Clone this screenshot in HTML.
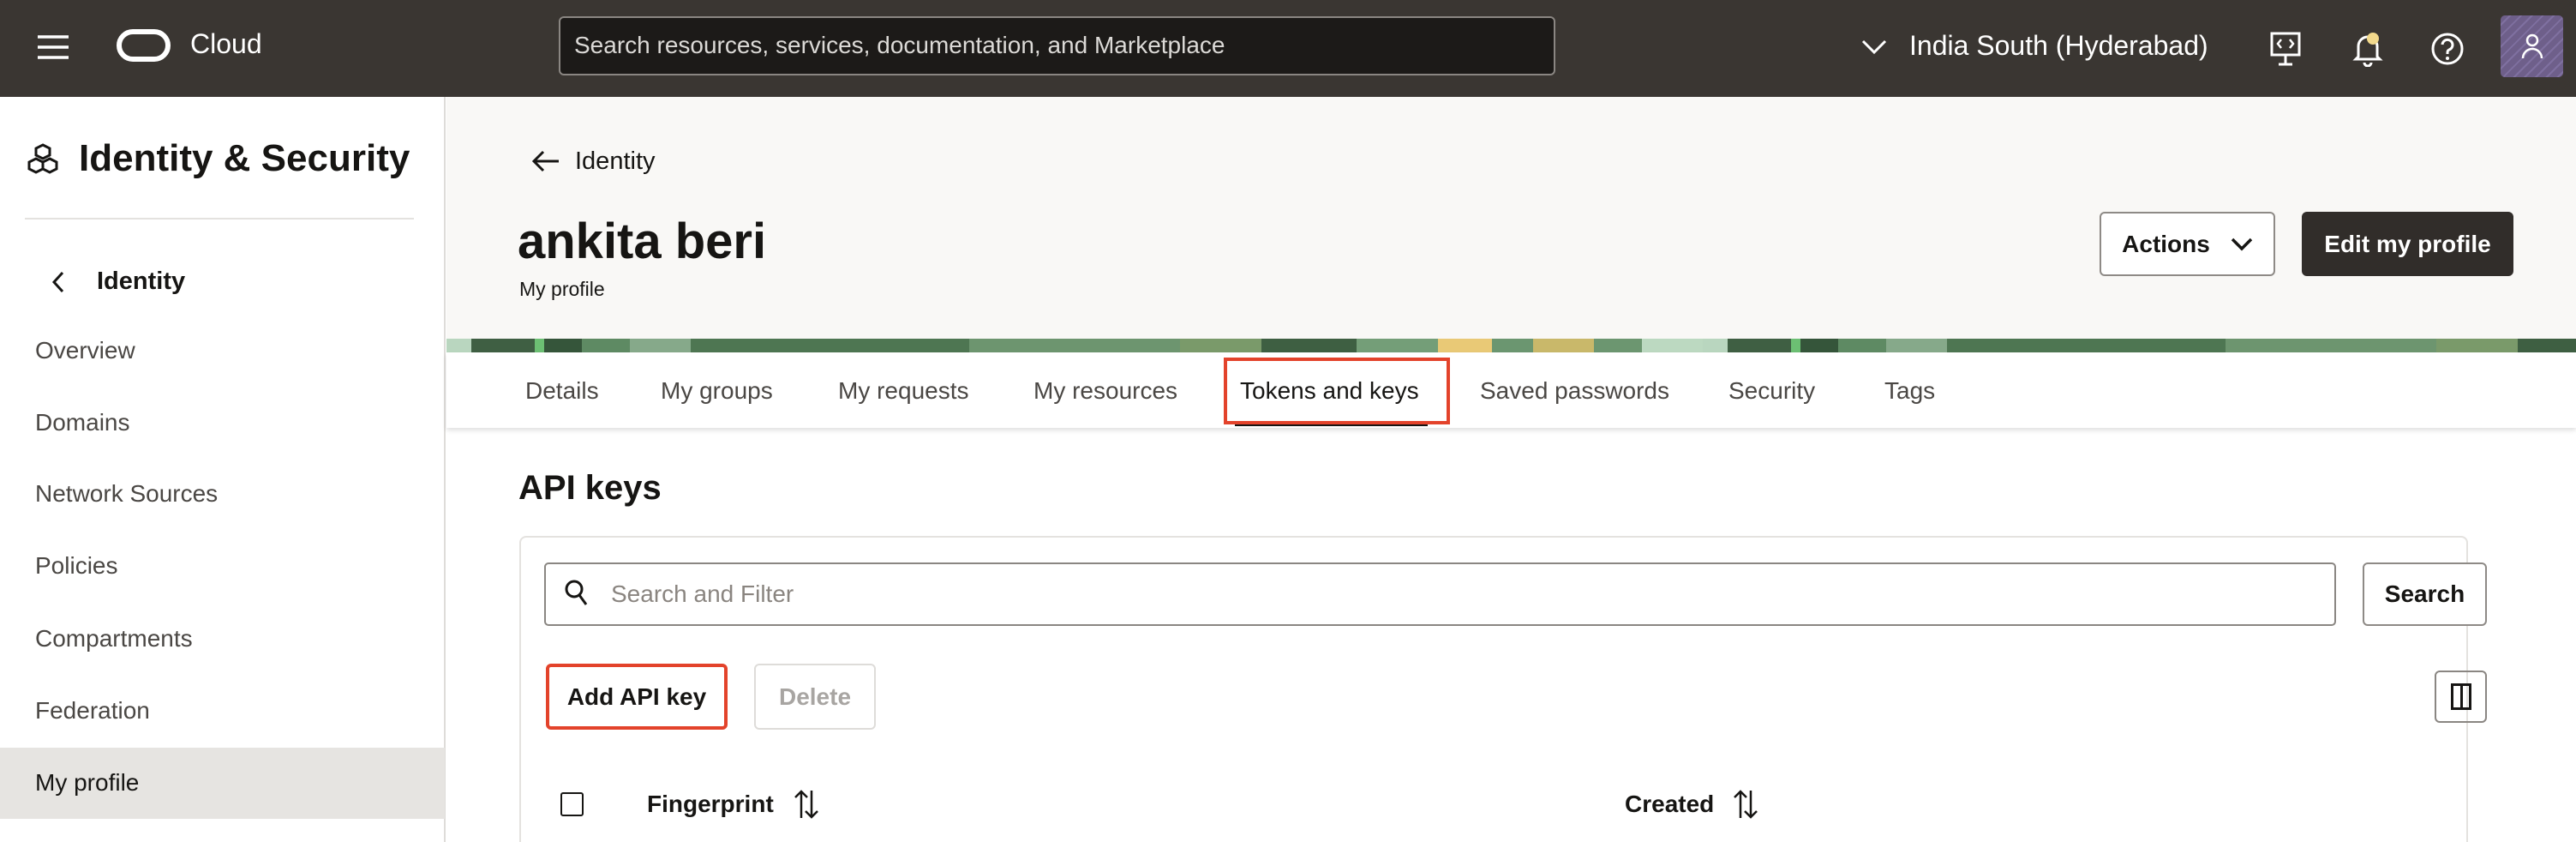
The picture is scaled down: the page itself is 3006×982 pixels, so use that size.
<!DOCTYPE html>
<html style="width:3006px;height:982px;overflow:hidden"><head><meta charset="utf-8">
<style>
*{box-sizing:border-box;margin:0;padding:0}
body{width:3006px;height:982px;overflow:hidden;font-family:"Liberation Sans",sans-serif;background:#fff;position:relative;color:#161513}
.a{position:absolute}
.top{left:0;top:0;width:3006px;height:113px;background:#3a3632}
.side{left:0;top:113px;width:520px;height:869px;background:#fff;border-right:2px solid #dedcd9}
.nav{left:41px;font-size:28px;color:#4a4744}
.hdr{left:521px;top:113px;width:2485px;height:282px;background:#f9f8f6}
.banner{left:521px;top:395px;width:2485px;height:16px;background:repeating-linear-gradient(90deg,#b9d6bf 0,#b9d6bf 29px,#3f5f43 29px,#3f5f43 103px,#6cbf73 103px,#6cbf73 114px,#35553a 114px,#35553a 158px,#5e8a63 158px,#5e8a63 214px,#86a98a 214px,#86a98a 285px,#4e7652 285px,#4e7652 610px,#6d956f 610px,#6d956f 856px,#7a9a6a 856px,#7a9a6a 951px,#3e5f42 951px,#3e5f42 1062px,#749e78 1062px,#749e78 1157px,#e9c976 1157px,#e9c976 1220px,#6b9670 1220px,#6b9670 1268px,#c9b86a 1268px,#c9b86a 1339px,#6c9670 1339px,#6c9670 1395px,#bcd9c1 1395px,#bcd9c1 1466px)}
.tabs{left:521px;top:411px;width:2485px;height:88px;background:#fff;box-shadow:0 3px 5px rgba(0,0,0,.12)}
.tab{top:440px;font-size:28px;color:#4a4744}
.btn{border:2px solid #8e8a86;border-radius:6px;background:#fff;font-size:28px;font-weight:bold;display:flex;align-items:center;justify-content:center}
</style></head><body>
<div class="a top"></div>
<svg class="a" style="left:44px;top:40px" width="36" height="30"><g stroke="#fff" stroke-width="3.5"><line x1="0" y1="3" x2="36" y2="3"/><line x1="0" y1="15" x2="36" y2="15"/><line x1="0" y1="27" x2="36" y2="27"/></g></svg>
<div class="a" style="left:136px;top:34px;width:63px;height:38px;border:6px solid #fff;border-radius:19px"></div>
<div class="a" style="left:222px;top:33px;font-size:32px;color:#fff">Cloud</div>
<div class="a" style="left:652px;top:19px;width:1163px;height:69px;background:#1c1a18;border:2px solid #8a8682;border-radius:6px"></div>
<div class="a" style="left:670px;top:37px;font-size:28px;color:#dcdad7">Search resources, services, documentation, and Marketplace</div>
<svg class="a" style="left:2172px;top:46px" width="30" height="18"><polyline points="2,2 15,15 28,2" fill="none" stroke="#fff" stroke-width="3"/></svg>
<div class="a" style="left:2228px;top:35px;font-size:32px;color:#fff">India South (Hyderabad)</div>
<svg class="a" style="left:2648px;top:36px" width="38" height="42"><rect x="3" y="3" width="32" height="25" fill="none" stroke="#fff" stroke-width="3"/><path d="M14 10l-4 5 4 5M24 10l4 5-4 5" fill="none" stroke="#fff" stroke-width="2.5"/><line x1="19" y1="28" x2="19" y2="38" stroke="#fff" stroke-width="3"/><line x1="11" y1="39" x2="27" y2="39" stroke="#fff" stroke-width="3"/></svg>
<svg class="a" style="left:2745px;top:36px" width="36" height="42"><path d="M7 30V18a11 11 0 0 1 22 0v12l3 3H4z" fill="none" stroke="#fff" stroke-width="3"/><path d="M14 37a4 4 0 0 0 8 0" fill="none" stroke="#fff" stroke-width="3"/><circle cx="24" cy="9" r="7" fill="#f2d98c"/></svg>
<svg class="a" style="left:2836px;top:37px" width="40" height="40"><circle cx="20" cy="20" r="17" fill="none" stroke="#fff" stroke-width="3"/><path d="M14 15a6 6 0 1 1 8 6c-2 1-2 2-2 5" fill="none" stroke="#fff" stroke-width="3"/><circle cx="20" cy="31" r="2" fill="#fff"/></svg>
<div class="a" style="left:2918px;top:18px;width:73px;height:72px;background:repeating-linear-gradient(135deg,#6e5f8a 0,#6e5f8a 7px,#7f70a0 7px,#7f70a0 9px);border-radius:5px"></div>
<svg class="a" style="left:2940px;top:38px" width="30" height="32"><circle cx="15" cy="9" r="6" fill="none" stroke="#fff" stroke-width="2.5"/><path d="M4 30a11 11 0 0 1 22 0" fill="none" stroke="#fff" stroke-width="2.5"/></svg>

<div class="a side"></div>
<svg class="a" style="left:30px;top:166px" width="40" height="40"><g fill="none" stroke="#161513" stroke-width="3"><path d="M20 3l8 4v8l-8 4-8-4V7z"/><path d="M12 19l8 4v8l-8 4-8-4v-8z"/><path d="M28 19l8 4v8l-8 4-8-4v-8z"/></g></svg>
<div class="a" style="left:92px;top:160px;font-size:44px;font-weight:bold">Identity &amp; Security</div>
<div class="a" style="left:29px;top:254px;width:454px;height:2px;background:#e4e2df"></div>
<svg class="a" style="left:60px;top:316px" width="16" height="26"><polyline points="13,2 3,13 13,24" fill="none" stroke="#161513" stroke-width="3"/></svg>
<div class="a" style="left:113px;top:312px;font-size:29px;font-weight:bold">Identity</div>
<div class="a nav" style="top:393px">Overview</div>
<div class="a nav" style="top:477px">Domains</div>
<div class="a nav" style="top:560px">Network Sources</div>
<div class="a nav" style="top:644px">Policies</div>
<div class="a nav" style="top:729px">Compartments</div>
<div class="a nav" style="top:813px">Federation</div>
<div class="a" style="left:0;top:872px;width:519px;height:83px;background:#e6e4e1"></div>
<div class="a nav" style="top:897px;color:#161513">My profile</div>

<div class="a hdr"></div>
<svg class="a" style="left:620px;top:175px" width="34" height="26"><path d="M32 13H4M14 2L3 13l11 11" fill="none" stroke="#161513" stroke-width="3"/></svg>
<div class="a" style="left:671px;top:172px;font-size:29px">Identity</div>
<div class="a" style="left:604px;top:248px;font-size:58px;font-weight:bold">ankita beri</div>
<div class="a" style="left:606px;top:324px;font-size:23px">My profile</div>
<div class="a btn" style="left:2450px;top:247px;width:205px;height:75px">Actions<svg style="margin-left:24px" width="26" height="16"><polyline points="2,2 13,13 24,2" fill="none" stroke="#161513" stroke-width="3.5"/></svg></div>
<div class="a btn" style="left:2686px;top:247px;width:247px;height:75px;background:#312d2a;border-color:#312d2a;color:#fff">Edit my profile</div>
<div class="a banner"></div>
<div class="a tabs"></div>
<div class="a tab" style="left:613px">Details</div>
<div class="a tab" style="left:771px">My groups</div>
<div class="a tab" style="left:978px">My requests</div>
<div class="a tab" style="left:1206px">My resources</div>
<div class="a tab" style="left:1447px;color:#161513">Tokens and keys</div>
<div class="a tab" style="left:1727px">Saved passwords</div>
<div class="a tab" style="left:2017px">Security</div>
<div class="a tab" style="left:2199px">Tags</div>
<div class="a" style="left:1441px;top:492px;width:225px;height:5px;background:#161513"></div>
<div class="a" style="left:1428px;top:417px;width:264px;height:78px;border:4px solid #e3432b"></div>

<div class="a" style="left:605px;top:547px;font-size:40px;font-weight:bold">API keys</div>
<div class="a" style="left:606px;top:625px;width:2274px;height:357px;border:2px solid #e4e2df;border-bottom:none;border-radius:8px 8px 0 0"></div>
<div class="a" style="left:635px;top:656px;width:2091px;height:74px;border:2px solid #8a8682;border-radius:5px"></div>
<svg class="a" style="left:658px;top:675px" width="30" height="34"><circle cx="12" cy="12" r="9" fill="none" stroke="#161513" stroke-width="3"/><line x1="18" y1="19" x2="26" y2="30" stroke="#161513" stroke-width="3"/></svg>
<div class="a" style="left:713px;top:677px;font-size:28px;color:#8a8580">Search and Filter</div>
<div class="a btn" style="left:2757px;top:656px;width:145px;height:74px">Search</div>
<div class="a btn" style="left:637px;top:774px;width:212px;height:77px;border:4px solid #e3432b">Add API key</div>
<div class="a btn" style="left:880px;top:774px;width:142px;height:77px;border-color:#dedcd9;color:#a8a5a2">Delete</div>
<div class="a" style="left:2841px;top:782px;width:61px;height:61px;border:2px solid #8a8682;border-radius:6px"></div>
<div class="a" style="left:2860px;top:797px;width:24px;height:31px;border:3px solid #161513"></div>
<div class="a" style="left:2871px;top:797px;width:3px;height:31px;background:#161513"></div>
<div class="a" style="left:654px;top:924px;width:27px;height:28px;border:2.5px solid #161513;border-radius:3px"></div>
<div class="a" style="left:755px;top:922px;font-size:28px;font-weight:bold">Fingerprint</div>
<svg class="a" style="left:926px;top:920px" width="30" height="36"><path d="M9 34V3M2 10l7-7 7 7M21 2v31M14 26l7 7 7-7" fill="none" stroke="#161513" stroke-width="2.5"/></svg>
<div class="a" style="left:1896px;top:922px;font-size:28px;font-weight:bold">Created</div>
<svg class="a" style="left:2022px;top:920px" width="30" height="36"><path d="M9 34V3M2 10l7-7 7 7M21 2v31M14 26l7 7 7-7" fill="none" stroke="#161513" stroke-width="2.5"/></svg>
</body></html>
